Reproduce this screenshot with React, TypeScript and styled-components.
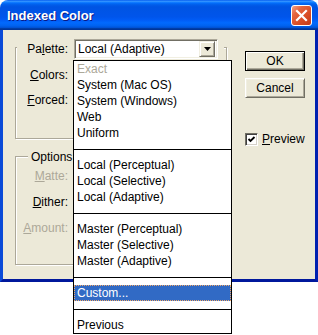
import React from "react";
import styled, { createGlobalStyle } from "styled-components";

const Global = createGlobalStyle`
  html, body { margin: 0; padding: 0; background: #ffffff; }
  body { font-family: "Liberation Sans", Arial, sans-serif; font-size: 12px; color: #000; }
`;

const Page = styled.div`
  position: relative;
  width: 318px;
  height: 335px;
  overflow: hidden;
`;

const Window = styled.div`
  width: 318px;
  display: flex;
  flex-direction: column;
`;

const TitleBar = styled.div`
  height: 30px;
  box-sizing: border-box;
  padding: 1px 6px 0 7px;
  display: flex;
  align-items: center;
  justify-content: space-between;
  border-radius: 8px 8px 0 0;
  background: linear-gradient(
    to bottom,
    #0058ee 0%,
    #3593ff 4%,
    #288eff 6%,
    #127dff 8%,
    #036ffc 10%,
    #0262ee 14%,
    #0057e5 20%,
    #0054e3 24%,
    #0055eb 56%,
    #005bf5 66%,
    #026afe 76%,
    #0062ef 86%,
    #0052d6 92%,
    #0040ab 94%,
    #003092 100%
  );
`;

const Title = styled.span`
  font-family: "Liberation Sans", Arial, sans-serif;
  font-weight: bold;
  font-size: 13px;
  color: #ffffff;
  text-shadow: 1px 1px 0 #0a1883;
`;

const CloseButton = styled.div`
  width: 21px;
  height: 21px;
  box-sizing: border-box;
  border: 1px solid #ffffff;
  border-radius: 3px;
  background: linear-gradient(135deg, #f3a28a 0%, #e5653f 28%, #d94e26 62%, #c43b1a 100%);
  display: flex;
  align-items: center;
  justify-content: center;
`;

const Body = styled.div`
  height: 252px;
  box-sizing: border-box;
  background: #ece9d8;
  border-left: 3px solid #0a4ad8;
  border-right: 3px solid #0020b0;
  border-bottom: 3px solid #00189c;
  padding: 17px 0 0 12px;
  display: flex;
  align-items: flex-start;
`;

const LeftCol = styled.div`
  width: 212px;
  display: flex;
  flex-direction: column;
`;

const Group = styled.div<{ $height: number; $gapTop?: number }>`
  height: ${(p) => p.$height}px;
  margin-top: ${(p) => p.$gapTop ?? 0}px;
  box-sizing: border-box;
  border: 1px solid #aca899;
  box-shadow: inset 1px 1px 0 #ffffff, 1px 1px 0 #ffffff;
  display: flex;
  flex-direction: column;
`;

const GroupHeader = styled.div<{ $pull: number; $indent: number; $height: number }>`
  align-self: flex-start;
  height: ${(p) => p.$height}px;
  margin-top: -${(p) => p.$pull}px;
  margin-left: ${(p) => p.$indent}px;
  padding: 0 3px;
  background: #ece9d8;
  display: flex;
  align-items: center;
  line-height: ${(p) => p.$height}px;
`;

const PaletteHeader = styled.div`
  align-self: flex-start;
  height: 20px;
  margin-top: -9px;
  margin-left: 1px;
  padding-right: 6px;
  background: #ece9d8;
  display: flex;
  align-items: center;
`;

const Row = styled.div<{ $height: number }>`
  height: ${(p) => p.$height}px;
  display: flex;
  align-items: center;
`;

const GroupBody = styled.div<{ $top: number }>`
  display: flex;
  flex-direction: column;
  padding-top: ${(p) => p.$top}px;
`;

const Label = styled.span<{ $disabled?: boolean; $width?: number }>`
  width: ${(p) => p.$width ?? 52}px;
  text-align: right;
  color: ${(p) => (p.$disabled ? "#aca899" : "#000000")};
  white-space: nowrap;
  flex-shrink: 0;
`;

const Key = styled.u`
  text-decoration: underline;
  text-underline-offset: 1px;
`;

const SelectBox = styled.div<{ $width: number }>`
  margin-left: 6px;
  width: ${(p) => p.$width}px;
  height: 20px;
  box-sizing: border-box;
  background: #ffffff;
  border: 1px solid;
  border-color: #aca899 #ffffff #ffffff #aca899;
  box-shadow: inset 1px 1px 0 #716f64, inset -1px -1px 0 #f1efe2;
  display: flex;
  align-items: center;
  justify-content: space-between;
  padding: 0 2px 0 3px;
`;

const SelectText = styled.span`
  white-space: nowrap;
`;

const DropButton = styled.div`
  width: 16px;
  height: 16px;
  box-sizing: border-box;
  background: #ece9d8;
  border: 1px solid;
  border-color: #f1efe2 #716f64 #716f64 #f1efe2;
  box-shadow: inset 1px 1px 0 #ffffff, inset -1px -1px 0 #aca899;
  display: flex;
  align-items: center;
  justify-content: center;
`;

const TextBox = styled.div<{ $width: number }>`
  margin-left: 6px;
  width: ${(p) => p.$width}px;
  height: 20px;
  box-sizing: border-box;
  background: #ffffff;
  border: 1px solid;
  border-color: #aca899 #ffffff #ffffff #aca899;
  box-shadow: inset 1px 1px 0 #716f64;
`;

const RightCol = styled.div`
  margin-left: 18px;
  padding-top: 4px;
  display: flex;
  flex-direction: column;
`;

const Button = styled.div<{ $default?: boolean; $gapTop?: number }>`
  width: 60px;
  height: 20px;
  margin-top: ${(p) => p.$gapTop ?? 0}px;
  box-sizing: border-box;
  background: #ece9d8;
  display: flex;
  align-items: center;
  justify-content: center;
  border: 1px solid;
  border-color: ${(p) => (p.$default ? "#000000" : "#ffffff #716f64 #716f64 #ffffff")};
  box-shadow: ${(p) =>
    p.$default
      ? "inset 1px 1px 0 #ffffff, inset -1px -1px 0 #716f64, inset -2px -2px 0 #aca899"
      : "inset 1px 1px 0 #f1efe2, inset -1px -1px 0 #aca899"};
`;

const CheckRow = styled.div`
  margin-top: 33px;
  height: 16px;
  display: flex;
  align-items: center;
`;

const CheckBox = styled.div`
  width: 13px;
  height: 13px;
  box-sizing: border-box;
  background: #ffffff;
  border: 1px solid;
  border-color: #716f64 #ffffff #ffffff #716f64;
  box-shadow: inset 1px 1px 0 #404040, inset -1px -1px 0 #d4d0c8;
  display: flex;
  align-items: center;
  justify-content: center;
`;

const CheckLabel = styled.span`
  margin-left: 4px;
`;

const ListPanel = styled.div`
  position: absolute;
  left: 73px;
  top: 60px;
  width: 159px;
  box-sizing: border-box;
  background: #ffffff;
  border: 1px solid #000000;
  display: flex;
  flex-direction: column;
`;

const ListItem = styled.div<{ $selected?: boolean; $disabled?: boolean }>`
  height: 16px;
  box-sizing: border-box;
  line-height: 14px;
  padding-left: 2px;
  white-space: nowrap;
  border: 1px ${(p) => (p.$selected ? "dotted #f0a868" : "solid transparent")};
  background: ${(p) => (p.$selected ? "#316ac5" : "transparent")};
  color: ${(p) => (p.$selected ? "#ffffff" : p.$disabled ? "#aca899" : "#000000")};
`;

const ListSeparator = styled.div`
  height: 16px;
  display: flex;
  align-items: center;
  &::before {
    content: "";
    display: block;
    width: 100%;
    height: 1px;
    background: #000000;
  }
`;

type Entry = { label?: string; sep?: boolean; disabled?: boolean; selected?: boolean };

const entries: Entry[] = [
  { label: "Exact", disabled: true },
  { label: "System (Mac OS)" },
  { label: "System (Windows)" },
  { label: "Web" },
  { label: "Uniform" },
  { sep: true },
  { label: "Local (Perceptual)" },
  { label: "Local (Selective)" },
  { label: "Local (Adaptive)" },
  { sep: true },
  { label: "Master (Perceptual)" },
  { label: "Master (Selective)" },
  { label: "Master (Adaptive)" },
  { sep: true },
  { label: "Custom...", selected: true },
  { sep: true },
  { label: "Previous" },
];

const DownArrow = () => (
  <svg width="7" height="4" viewBox="0 0 7 4">
    <path d="M0 0 H7 L3.5 4 Z" fill="#000" />
  </svg>
);

const CloseIcon = () => (
  <svg width="13" height="13" viewBox="0 0 13 13">
    <path d="M2 2 L11 11 M11 2 L2 11" stroke="#fff" strokeWidth="2.2" strokeLinecap="square" />
  </svg>
);

const CheckIcon = () => (
  <svg width="9" height="9" viewBox="0 0 9 9">
    <path d="M1.5 4 L3.5 6 L7.5 2" stroke="#000" strokeWidth="1.8" fill="none" />
  </svg>
);

export default function App() {
  return (
    <Page>
      <Global />
      <Window>
        <TitleBar>
          <Title>Indexed Color</Title>
          <CloseButton>
            <CloseIcon />
          </CloseButton>
        </TitleBar>
        <Body>
          <LeftCol>
            <Group $height={92}>
              <PaletteHeader>
                <Label $width={51}>
                  Pa<Key>l</Key>ette:
                </Label>
                <SelectBox $width={144}>
                  <SelectText>Local (Adaptive)</SelectText>
                  <DropButton>
                    <DownArrow />
                  </DropButton>
                </SelectBox>
              </PaletteHeader>
              <GroupBody $top={3}>
                <Row $height={25}>
                  <Label>
                    <Key>C</Key>olors:
                  </Label>
                  <TextBox $width={40} />
                </Row>
                <Row $height={25}>
                  <Label>
                    <Key>F</Key>orced:
                  </Label>
                  <SelectBox $width={100}>
                    <SelectText />
                    <DropButton>
                      <DownArrow />
                    </DropButton>
                  </SelectBox>
                </Row>
              </GroupBody>
            </Group>
            <Group $height={109} $gapTop={17}>
              <GroupHeader $pull={6} $indent={12} $height={12}>
                Options
              </GroupHeader>
              <GroupBody $top={0}>
                <Row $height={26}>
                  <Label $disabled>
                    <Key>M</Key>atte:
                  </Label>
                  <SelectBox $width={100}>
                    <SelectText />
                    <DropButton>
                      <DownArrow />
                    </DropButton>
                  </SelectBox>
                </Row>
                <Row $height={26}>
                  <Label>
                    <Key>D</Key>ither:
                  </Label>
                  <SelectBox $width={100}>
                    <SelectText />
                    <DropButton>
                      <DownArrow />
                    </DropButton>
                  </SelectBox>
                </Row>
                <Row $height={26}>
                  <Label $disabled>
                    <Key>A</Key>mount:
                  </Label>
                  <TextBox $width={40} />
                </Row>
              </GroupBody>
            </Group>
          </LeftCol>
          <RightCol>
            <Button $default>OK</Button>
            <Button $gapTop={7}>Cancel</Button>
            <CheckRow>
              <CheckBox>
                <CheckIcon />
              </CheckBox>
              <CheckLabel>
                <Key>P</Key>review
              </CheckLabel>
            </CheckRow>
          </RightCol>
        </Body>
      </Window>
      <ListPanel>
        {entries.map((e, i) =>
          e.sep ? (
            <ListSeparator key={i} />
          ) : (
            <ListItem key={i} $selected={e.selected} $disabled={e.disabled}>
              {e.label}
            </ListItem>
          )
        )}
      </ListPanel>
    </Page>
  );
}
